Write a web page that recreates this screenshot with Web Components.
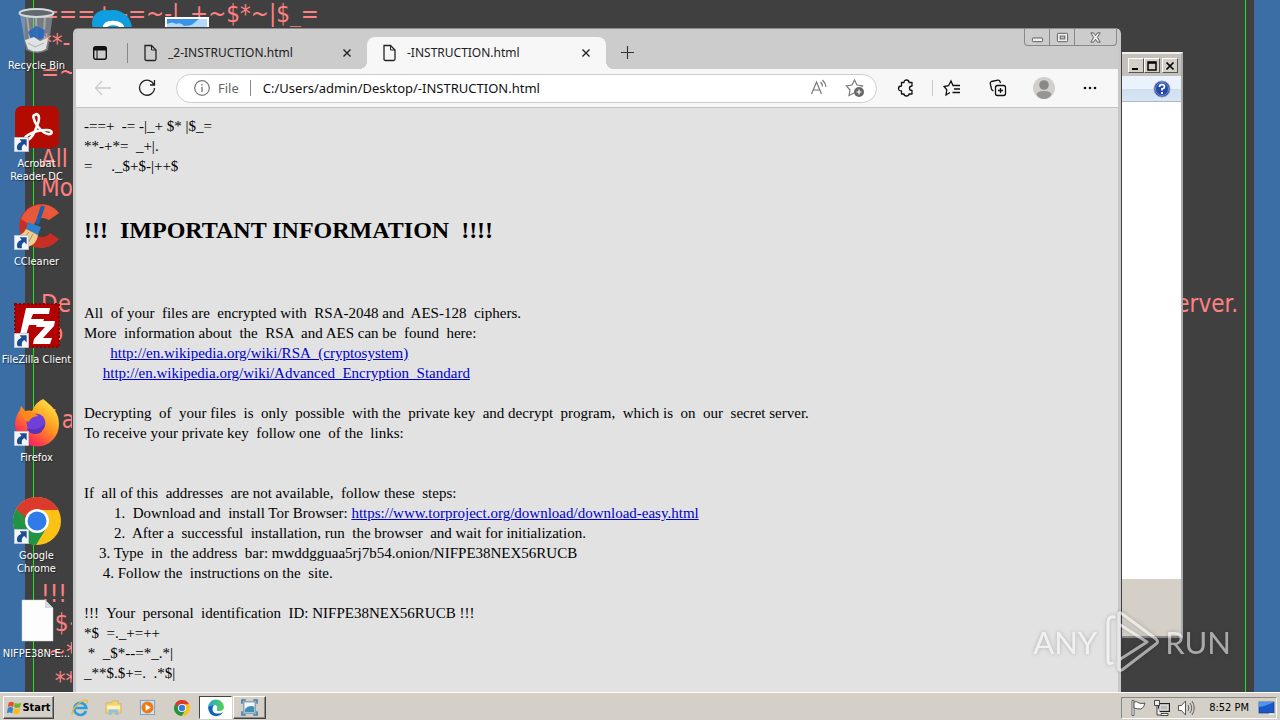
<!DOCTYPE html>
<html lang="en">
<head>
<meta charset="utf-8">
<title>Desktop</title>
<style>
  body { margin: 0; }
</style>
</head>
<body>
<desk-top>
  <wall-paper slot="wallpaper"></wall-paper>
  <desk-icon slot="icons" icon="bin" label="Recycle Bin"></desk-icon>
  <desk-icon slot="icons" icon="acrobat" shortcut label="Acrobat Reader DC"></desk-icon>
  <desk-icon slot="icons" icon="ccleaner" shortcut label="CCleaner"></desk-icon>
  <desk-icon slot="icons" icon="filezilla" shortcut label="FileZilla Client"></desk-icon>
  <desk-icon slot="icons" icon="firefox" shortcut label="Firefox"></desk-icon>
  <desk-icon slot="icons" icon="chrome" shortcut label="Google Chrome"></desk-icon>
  <desk-icon slot="icons" icon="blank" label="NIFPE38N-E..."></desk-icon>
  <desk-icon slot="icons2" icon="skype"></desk-icon>
  <desk-icon slot="icons2" icon="photo"></desk-icon>
  <classic-window slot="windows"></classic-window>
  <browser-window slot="windows">
    <browser-tab slot="tabs" label="_2-INSTRUCTION.html"></browser-tab>
    <browser-tab slot="tabs" label="-INSTRUCTION.html" active></browser-tab>
    <note-page></note-page>
  </browser-window>
  <water-mark slot="windows"></water-mark>
  <task-bar slot="taskbar"></task-bar>
</desk-top>

<script>
const icons = {
  bin: ['48 48', `<path d="M7 7 13 43Q24 49 35 43L40 7Z" fill="#aeb8c0" opacity=".5"/><path d="M14 9 18 42M23 10 24 43M32 9 30 42" stroke="#f3f7fa" stroke-width="2" opacity=".35"/><ellipse cx="23.500" cy="6" rx="17" ry="4" fill="#62696e" stroke="#d5dadd" stroke-width="2"/><path d="M15 25l8-6 9 4-1 8-12 3z" fill="#1d63c0" opacity=".8"/><path d="M12 33l9-3 6 4 8-3-2 11q-9 5-18 0z" fill="#e0e3e3"/><path d="M15 36l7 4 9-4" stroke="#a9afb2" fill="none"/>`],
  acrobat: ['48 48', `<rect x="2" y="1" width="44" height="42" rx="7" fill="#b30b00"/><path d="M22 10c3-3 6 2 2 11-2 6-6 12-9 14-4 2-5-2 0-5 6-4 13-5 19-5 6 0 6 5 1 4-6-1-13-10-14-15-1-2-1-4 1-4Z" fill="none" stroke="#fff" stroke-width="2.600"/>`],
  ccleaner: ['48 48', `<path d="M46 10A22 22 0 1 0 46 36L37 30A10 10 0 1 1 36 17Z" fill="#c92e24"/><path d="M46 10A22 22 0 0 0 8 16l12 8q4-13 16-7Z" fill="#e8583a"/><path d="M30 3 24 21" stroke="#1d5fa6" stroke-width="4"/><path d="M15 19l13 5-3 8-12-6Z" fill="#2f80cb"/><path d="M13 26l12 6q-1 9-10 12L2 34Q10 32 13 26Z" fill="#f0cf8e"/><path d="M16 29 9 38M20 31l-6 11" stroke="#b98d47"/>`],
  filezilla: ['48 48', `<rect x="2" y="3" width="44" height="43" fill="#b30000" stroke="#8c0000" stroke-width="2" stroke-dasharray="2 2"/><path d="M13 7h24l-1 6H20l-2 5h13l-2 6H16l-4 14H6Z M25 20h17l-1 5-11 12h9l-2 6H20l1-5 11-12h-9Z" fill="#fff"/>`],
  firefox: ['48 48', `<defs><linearGradient id="a" x1=".9" y1="0" x2=".2" y2="1"><stop offset="0" stop-color="#fff24a"/><stop offset=".45" stop-color="#ff9a1f"/><stop offset=".8" stop-color="#ff3a4b"/><stop offset="1" stop-color="#e31587"/></linearGradient></defs><path d="M30 0c9 7 16 13 16 25A22 22 0 0 1 2 26c0-6 2-11 5-15l1-4 4 5q4-1 7 0Q23 3 30 0Z" fill="url(#a)"/><circle cx="23" cy="24" r="9.500" fill="#7040d8"/><path d="M9 12q12 0 16 5-8 1-9 6Q8 19 9 12Z" fill="#ff8a16"/><path d="M14 29q9 4 18-4-2 11-11 10-6-1-7-6Z" fill="#5c32b8"/>`],
  chrome: ['48 48', `<circle cx="24" cy="24" r="24" fill="#fbc116"/><path d="M24 24 3.200 12A24 24 0 0 1 44.800 12L45 13H24Z" fill="#dc3a2c"/><path d="M3.200 12A24 24 0 0 0 23 48L34 30 24 24 14 30Z" fill="#1f9447"/><path d="M3.200 12 14 30 24 24V12Z" fill="#dc3a2c"/><path d="M3.200 12 14 30 17 24Z" fill="#1f9447"/><circle cx="24" cy="24" r="12" fill="#fff"/><circle cx="24" cy="24" r="9.500" fill="#2f7be8"/>`],
  blank: ['48 48', `<path d="M9 5h23l8 8v33H9Z" fill="#fdfdfd" stroke="#c9cdd0" stroke-width=".5"/><path d="M32 5v8h8Z" fill="#d3dadd"/>`],
  skype: ['48 48', `<circle cx="24" cy="22" r="19" fill="#0f9fe0"/><circle cx="16" cy="16" r="13" fill="#0f9fe0"/><path d="M33 21q-1-5-9-5t-8 5q0 4 8 5t8 5q-1 5-9 5t-8-5" fill="none" stroke="#fff" stroke-width="4.500"/>`],
  photo: ['48 48', `<rect x="1" y="10" width="44" height="34" fill="#fff"/><rect x="3" y="12" width="40" height="28" fill="#3b93e6"/><path d="M3 17q6-3 9 0 5-2 8 2 8 0 10-3l5-4h8v20H3Z" fill="#b4d8f8"/>`],
  shortcut: ['16 16', `<path d="M.5.5h15v15H.5Z" fill="#f3f6f9" stroke="#bfc8d0"/><path d="M6 2.500h7.500V10L11 7.500Q7.500 9 8.500 14H4Q1 8 8 5Z" fill="#1c4d94"/>`],
  file: ['16 18', `<path d="M3 1.500h6.500L14 6v9q0 1.500-1.500 1.500h-8Q3 16.500 3 15Z" fill="none" stroke="#222" stroke-width="1.300"/><path d="M9.500 1.500V6H14" fill="none" stroke="#222"/>`],
  close: ['10 10', `<path d="M1.500 1.500 8.500 8.500M8.500 1.500 1.500 8.500" stroke="#222" stroke-width="1.400"/>`],
  workspace: ['16 16', `<rect x="1.700" y="1.700" width="12.600" height="12.600" rx="2" fill="none" stroke="#111" stroke-width="1.400"/><path d="M2 2.500h12V5H2ZM5 5v9" stroke="#111" fill="#111" stroke-width="1"/>`],
  plus: ['16 16', `<path d="M8 1v14M1 8h14" stroke="#333" stroke-width="1.200"/>`],
  back: ['18 18', `<path d="M17 9H1.500M8 2 1.500 9 8 16" fill="none" stroke="#ccc" stroke-width="1.300"/>`],
  reload: ['18 18', `<path d="M16 6A7.500 7.500 0 1 0 16.500 9M16.500 1v5H12" fill="none" stroke="#222" stroke-width="1.300"/>`],
  info: ['18 18', `<circle cx="9" cy="9" r="7.300" fill="none" stroke="#777" stroke-width="1.200"/><path d="M9 8v5M9 5v1.500" stroke="#777" stroke-width="1.400"/>`],
  read: ['18 18', `<path d="M1.500 15 6.500 3l5 12M3.500 11h6M10.500 3q2 2 2 4.500M12.500 1q3 3 3.500 7" fill="none" stroke="#777" stroke-width="1.200"/>`],
  addstar: ['20 20', `<path d="M9 15 4 17.500 5 12 1.500 8 7 7 9.500 2 12 7l5.500 1-1 1" fill="none" stroke="#777" stroke-width="1.200"/><circle cx="14" cy="14" r="5" fill="#666"/><path d="M14 11.500v5M11.500 14h5" stroke="#fff" stroke-width="1.200"/>`],
  puzzle: ['18 18', `<path d="M4.500 3.500H7Q7 1 9.500 1T12 3.500h3V7Q12.500 7 12.500 9.200T15 11.500V15h-3q0 2-2.500 2T7 15H4.500v-3Q1.500 12 1.500 9.500T4.500 7Z" fill="none" stroke="#111" stroke-width="1.300" stroke-linejoin="round"/>`],
  star: ['18 18', `<path d="M7 13.500 3 16l.8-5.200L1 7.500l4.500-.8L8 2l2 4.500h7M11 10h6M9.500 13.500H17" fill="none" stroke="#111" stroke-width="1.300"/>`],
  collections: ['18 18', `<rect x="6.500" y="6.500" width="10" height="10" rx="2" fill="none" stroke="#111" stroke-width="1.300"/><path d="M11.500 9v5M9 11.500h5M4.500 12Q3 11.500 2.500 10L1.200 4.500Q1 3 2.500 2.500L9 1.200Q10.500 1 11 2.500L11.500 4" fill="none" stroke="#111" stroke-width="1.300"/>`],
  avatar: ['22 22', `<circle cx="11" cy="11" r="11" fill="#d2d0ce"/><circle cx="11" cy="8" r="4.800" fill="#8a8886"/><path d="M3.500 18q0-4 7.500-4t7.500 4q-3 4-7.500 4t-7.500-4Z" fill="#979593"/>`],
  dots: ['16 16', `<circle cx="3" cy="8" r="1.300" fill="#111"/><circle cx="8" cy="8" r="1.300" fill="#111"/><circle cx="13" cy="8" r="1.300" fill="#111"/>`],
  min: ['14 14', `<rect x="1.500" y="7.500" width="11" height="4" rx="1" fill="#eee" stroke="#555"/>`],
  max: ['14 14', `<rect x="1.500" y="2.500" width="11" height="9" rx="1" fill="#eee" stroke="#555"/><rect x="4.500" y="5.500" width="5" height="3" fill="#ccc" stroke="#555"/>`],
  shut: ['14 14', `<path d="M2 2h3l2 3 2-3h3L9 7l3 5H9L7 9l-2 3H2l3-5Z" fill="#eee" stroke="#555"/>`],
  cmin: ['10 10', `<path d="M1 8h6" stroke="#000" stroke-width="2"/>`],
  cmax: ['10 10', `<path d="M1 1h8v8H1Z M1 2h8" fill="none" stroke="#000" stroke-width="1.500"/>`],
  cshut: ['10 10', `<path d="M1.500 1.500 8.500 8.500M8.500 1.500 1.500 8.500" stroke="#000" stroke-width="1.700"/>`],
  help: ['18 18', `<circle cx="9" cy="9" r="8" fill="#2348a8" stroke="#8b99b8"/><circle cx="9" cy="9" r="6.500" fill="none" stroke="#90a8e0" stroke-width=".7"/><path d="M6.500 7Q6.500 4.700 9 4.700T11.500 7Q11.500 8.300 9 9v1.500M9 12v2" fill="none" stroke="#fff" stroke-width="1.800"/>`],
  winlogo: ['18 18', `<path d="M3 3q3-2 6 0L8 8Q5 6 2 8Z" fill="#e8502a"/><path d="M10 3q3 2 7 0l-1 5q-4 2-7 0Z" fill="#6bb52c"/><path d="M2 9q3-2 6 0l-1 6q-3-2-6 0Z" fill="#2e84d8"/><path d="M9 9q3 2 7 0l-1 6q-4 2-7 0Z" fill="#f6bd1a"/>`],
  ie: ['18 18', `<path d="M15 12a6 6 0 1 1 .3-3H5" fill="none" stroke="#2f9be0" stroke-width="2.600"/><path d="M1.500 15.500Q0 12 6 6q7-6 10-4.500 1 1-.5 3" fill="none" stroke="#e9b92c" stroke-width="1.300"/>`],
  folder: ['18 18', `<path d="M1 4h6l1-2h6v3h3v10H1Z" fill="#f0d372" stroke="#cda74a" stroke-width=".6"/><path d="M2 7h14v4H2Z" fill="#fff2b8"/><path d="M4 17v-5q0-1 1-1h8q1 0 1 1v5h-3v-3H7v3Z" fill="#8bc3e8"/>`],
  wmp: ['18 18', `<rect x="1.500" y="1.500" width="15" height="15" fill="#cfe3f3" stroke="#7a9fc0"/><circle cx="9" cy="9" r="6.300" fill="#ee7a12"/><path d="M7 5.500 12.500 9 7 12.500Z" fill="#fff"/>`],
  edge: ['18 18', `<defs><linearGradient id="e" x1="0" y1="0" x2="1" y2=".2"><stop offset="0" stop-color="#22a5d8"/><stop offset="1" stop-color="#54cf5b"/></linearGradient></defs><path d="M1 9a8 8 0 0 1 16-1q0 4-5 4-3 0-2-2 1-4-3-4-4 0-6 3Z" fill="url(#e)"/><path d="M1 8.500Q3 5.500 7 6q-2 2-1.500 4.500Q6 15 11 14.500q3 0 5-1.500-2 4-7 4.200Q2 17 1 8.500Z" fill="#1263b8"/>`],
  snap: ['18 18', `<rect x="3" y="3" width="12" height="12" fill="#eff7fb" stroke="#66859c"/><path d="M4 11q4-5 10-3v6H4Z" fill="#3d91b5"/><path d="M1 5V1h4M13 1h4v4M17 13v4h-4M5 17H1v-4" fill="none" stroke="#3e7ca8" stroke-width="1.600"/>`],
  flag: ['18 18', `<path d="M3 1.500h2v15H3Z" fill="#fff" stroke="#444" stroke-width=".8"/><path d="M5 3q3-1 5 1 3 1 6 0-1 5-4 6-4 0-7-1Z" fill="#fff" stroke="#444" stroke-width=".9"/>`],
  net: ['18 18', `<rect x="5.500" y="4.500" width="11" height="8" fill="#999" stroke="#222"/><rect x="7" y="6" width="8" height="5" fill="#bdbdbd" stroke="#fff" stroke-width=".7"/><path d="M8 14.500h7v2H8Z" fill="#fff" stroke="#222" stroke-width=".8"/><path d="M1.500 1.500h5v5h-5ZM4 6v10h4" fill="#eee" stroke="#333" stroke-width=".9"/>`],
  sound: ['18 18', `<path d="M1.500 6.500h3l4-4.500v14l-4-4.500h-3Z" fill="#fff" stroke="#444" stroke-width=".9"/><path d="M11 6q2 3 0 6M13 4q3.500 5 0 10M15 2q4.500 7 0 14" fill="none" stroke="#555" stroke-width=".9"/>`],
  screen: ['18 18', `<rect x="1" y="3" width="15" height="11" fill="#1a57c8" stroke="#173a78" stroke-width=".7"/><path d="M1 8q7-1 15-5H1Z" fill="#4d93f0"/><path d="M11 15h5" stroke="#eee" stroke-width="1.500"/>`],
  play: ['56 64', `<path d="M9 53Q5 55 5 50V13q0-7 6-6M16 50V4q0-2 2-1L53 29q3 3 0 5L19 60q-2 1-3-1V50l28-18M16 14l28 18" fill="none" stroke="#fff" stroke-width="3" stroke-linejoin="round" stroke-linecap="round"/>`]
};

const define = (name, markup) => customElements.define(name, class extends HTMLElement {
  constructor() {
    super();
    const root = this.attachShadow({ mode: 'open' });
    const t = document.createElement('template');
    t.innerHTML = typeof markup === 'function' ? markup(this) : markup;
    root.append(t.content.cloneNode(true));
  }
});
const attr = (el, name) => el.getAttribute(name) || '';
const ic = (name, size) => `<ui-icon name="${name}" style="--w:${size}px"></ui-icon>`;

customElements.define('ui-icon', class extends HTMLElement {
  connectedCallback() {
    if (this.shadowRoot) return;
    const [box, art] = icons[this.getAttribute('name')];
    this.attachShadow({ mode: 'open' }).innerHTML =
      `<style>:host{display:block;width:var(--w);flex:none}svg{display:block;width:100%}</style>
       <svg viewBox="0 0 ${box}" aria-hidden="true">${art}</svg>`;
  }
});

define('desk-top', `
<style>
  :host { display: grid; grid-template-rows: minmax(0, 1fr) auto; height: 100vh; overflow: hidden; background: #3a6ea5;
    font: 11px/13px "DejaVu Sans Condensed", "Noto Sans", sans-serif; }
  main { position: relative; min-height: 0; overflow: hidden; }
  .icons { position: absolute; inset: 0 auto auto 0; width: 73px; display: grid; grid-auto-rows: 98px; }
  .more { position: absolute; top: 0; left: 75px; display: grid; grid-template-columns: 75px 75px; }
</style>
<main>
  <slot name="wallpaper"></slot>
  <div class="icons"><slot name="icons"></slot></div>
  <div class="more"><slot name="icons2"></slot></div>
  <slot name="windows"></slot>
</main>
<slot name="taskbar"></slot>`);

define('wall-paper', `
<style>
  :host { display: block; position: absolute; inset: 0 26px 0 25px; background: #404040; color: #ff8080;
    font-size: 24px; line-height: 29px; overflow: hidden; padding: 0 8px; }
  .in { border: solid #1ee61e; border-width: 0 1px; height: 100%; padding: 0 7px; box-sizing: border-box; }
  .row { height: 29px; white-space: pre; display: flex; justify-content: space-between; }
</style>
<div class="in"></div>`);
{
  const rows = { 0: '===+ -=~-|_+~$*~|$_=', 1: '**-', 2: '=~', 5: 'All', 6: 'Mo', 10: 'De', 11: 'To', 14: 'If a', 20: '!!!', 21: '  $~', 22: ' ~*', 23: '  **', 24: '=' };
  const box = document.querySelector('wall-paper').shadowRoot.querySelector('.in');
  for (let i = 0; i < 25; i++) {
    const row = document.createElement('div');
    row.className = 'row';
    row.append(Object.assign(document.createElement('span'), { textContent: rows[i] || '' }));
    if (i === 10) row.append(Object.assign(document.createElement('span'), { textContent: 'erver.' }));
    box.append(row);
  }
}

define('desk-icon', el => `
<style>
  :host { display: flex; flex-direction: column; align-items: center; padding-top: 7px; color: #fff; text-align: center; }
  .art { position: relative; width: 48px; }
  .cut { position: absolute; left: 1px; bottom: 1px; }
  span { display: block; margin-top: 4px; width: 70px; text-shadow: 1px 1px 1px #0008; }
</style>
<div class="art">${ic(attr(el, 'icon'), 48)}${el.hasAttribute('shortcut') ? `<div class="cut">${ic('shortcut', 15)}</div>` : ''}</div>
<span>${attr(el, 'label')}</span>`);

define('classic-window', `
<style>
  :host { display: flex; flex-direction: column; position: absolute; inset: 52px 97px 54px 640px; background: #d4d0c8;
    border: 2px solid #e4e1dc; border-right-color: #aaa; border-bottom-color: #888; border-top-color: #f2f0ec; box-sizing: border-box; }
  header { display: flex; justify-content: flex-end; padding: 4px 3px 3px; background: #c4c0bb; }
  button { width: 16px; height: 15px; padding: 0; display: grid; place-items: center; background: #d4d0c8;
    border: 1px solid; border-color: #fff #555 #555 #fff; }
  button:last-child { margin-left: 2px; }
  .bar { display: flex; justify-content: flex-end; align-items: center; height: 26px; padding-right: 10px;
    box-sizing: border-box; background: linear-gradient(#eaf3fc 50%, #cfdff0 50%, #d8e6f4); border-bottom: 1px solid #aab8c8; }
  .bar button { border: 0; margin: 0; width: 18px; height: 18px; background: none; }
  .pane { flex: 1; background: #fff; }
  footer { height: 57px; }
</style>
<header><button aria-label="Minimize">${ic('cmin', 10)}</button><button aria-label="Maximize">${ic('cmax', 10)}</button><button aria-label="Close">${ic('cshut', 10)}</button></header>
<div class="bar"><button aria-label="Help">${ic('help', 18)}</button></div>
<div class="pane"></div><footer></footer>`);

define('browser-tab', el => `
<style>
  :host { display: flex; align-items: center; gap: 10px; flex: 0 1 239px; min-width: 0; height: 32px; box-sizing: border-box;
    padding: 0 12px 0 14px; color: #222; border-radius: 8px 8px 0 0; position: relative; font: 12px/16px "Noto Sans", sans-serif; }
  :host([active]) { background: #f7f7f7; }
  :host([active])::before, :host([active])::after { content: ""; position: absolute; bottom: 0; width: 8px; height: 8px; }
  :host([active])::before { left: -8px; background: radial-gradient(circle at 0 0, #0000 8px, #f7f7f7 8px); }
  :host([active])::after { right: -8px; background: radial-gradient(circle at 100% 0, #0000 8px, #f7f7f7 8px); }
  span { flex: 1; white-space: nowrap; overflow: hidden; }
  button { width: 16px; height: 16px; padding: 0; border: 0; background: none; display: grid; place-items: center; }
</style>
${ic('file', 16)}<span>${attr(el, 'label')}</span><button aria-label="Close tab">${ic('close', 10)}</button>`);

define('browser-window', `
<style>
  :host { display: flex; flex-direction: column; position: absolute; inset: 28px 159px 0 73px; background: #ccc;
    border: solid #c8c8c8; border-width: 1px 3px 0; border-top-color: #8b8b8b; outline: 1px solid #404040;
    border-radius: 5px 5px 0 0; box-sizing: border-box; overflow: hidden; }
  button { border: 0; padding: 0; background: none; display: grid; place-items: center; flex: none; width: 30px; height: 30px; }
  .strip { display: flex; align-items: flex-end; height: 40px; padding-left: 9px; }
  .space { margin: 0 12px 1px 0; }
  .strip > i { width: 1px; height: 20px; background: #888; margin-bottom: 6px; }
  .new { margin: 0 0 2px 6px; }
  .controls { display: flex; align-self: flex-start; margin-left: auto; margin-right: 1px; border: 1px solid #888; border-top: 0;
    border-radius: 0 0 4px 4px; height: 17px; box-sizing: border-box; }
  .controls button { width: 25px; height: 16px; border-right: 1px solid #888; }
  .controls button:last-child { width: 41px; border: 0; }
  .tools { display: flex; align-items: center; height: 38px; padding: 0 13px 0 12px; gap: 14px; background: #f7f7f7; border-bottom: 1px solid #c2c2c2; }
  .address { flex: 1; min-width: 0; display: flex; align-items: center; height: 29px; padding: 0 10px 0 16px; gap: 7px; box-sizing: border-box;
    border: 1px solid #ccc; border-radius: 15px; background: #fff; }
  label { font: 13px/16px "Noto Sans", sans-serif; color: #666; }
  .address i { width: 1px; height: 16px; background: #888; margin: 0 5px 0 4px; }
  input { flex: 1; min-width: 0; border: 0; padding: 0; background: none; outline: 0; font: 13px/18px "Noto Sans", sans-serif; color: #111; }
  .address button { width: 22px; height: 22px; }
  .address button:last-child { margin-left: 7px; }
  .right { display: flex; align-items: center; gap: 16px; }
  .right i { width: 1px; height: 16px; background: #c8c8c8; margin: 0 -12px 0 -5px; }
  .page { flex: 1; min-height: 0; overflow: hidden; background: #e2e2e2; }
</style>
<div class="strip">
  <button class="space" aria-label="Tab actions">${ic('workspace', 16)}</button><i></i>
  <slot name="tabs"></slot>
  <button class="new" aria-label="New tab">${ic('plus', 15)}</button>
  <div class="controls"><button aria-label="Minimize">${ic('min', 13)}</button><button aria-label="Maximize">${ic('max', 13)}</button><button aria-label="Close">${ic('shut', 13)}</button></div>
</div>
<div class="tools">
  <button aria-label="Back">${ic('back', 18)}</button>
  <button aria-label="Reload">${ic('reload', 18)}</button>
  <div class="address">
    ${ic('info', 18)}<label for="url">File</label><i></i>
    <input id="url" value="C:/Users/admin/Desktop/-INSTRUCTION.html" spellcheck="false">
    <button aria-label="Read aloud">${ic('read', 18)}</button><button aria-label="Add to favorites">${ic('addstar', 20)}</button>
  </div>
  <div class="right">
    <button aria-label="Extensions">${ic('puzzle', 18)}</button><i></i>
    <button aria-label="Favorites">${ic('star', 18)}</button>
    <button aria-label="Collections">${ic('collections', 18)}</button>
    <button aria-label="Profile">${ic('avatar', 22)}</button>
    <button aria-label="Settings">${ic('dots', 16)}</button>
  </div>
</div>
<div class="page"><slot></slot></div>`);

define('note-page', `<style>
  :host { display: block; padding: 8px; font: 15px/20px "Liberation Serif", "Times New Roman", serif; color: #000; }
  p, h1 { margin: 0; white-space: pre; }
  p + p { margin-top: 20px; }
  p + p.far { margin-top: 40px; }
  h1 { font-size: 24px; line-height: 28px; margin: 40px 0 59px; }
  a { color: #0000c8; }
</style><p>-==+  -= -|_+ $* |$_=
**-+*=  _+|.
=     ._$+$-|++$</p><h1>!!!  IMPORTANT INFORMATION  !!!!</h1><p>All  of your  files are  encrypted with  RSA-2048 and  AES-128  ciphers.
More  information about  the  RSA  and AES can be  found  here:
       <a href="http://en.wikipedia.org/wiki/RSA_(cryptosystem)">http://en.wikipedia.org/wiki/RSA_(cryptosystem)</a>
     <a href="http://en.wikipedia.org/wiki/Advanced_Encryption_Standard">http://en.wikipedia.org/wiki/Advanced_Encryption_Standard</a></p><p>Decrypting  of  your files  is  only  possible  with the  private key  and decrypt  program,  which is  on  our  secret server.
To receive your private key  follow one  of the  links:</p><p class="far">If  all of this  addresses  are not available,  follow these  steps:
        1.  Download and  install Tor Browser: <a href="https://www.torproject.org/download/download-easy.html">https://www.torproject.org/download/download-easy.html</a>
        2.  After a  successful  installation, run  the browser  and wait for initialization.
    3. Type  in  the address  bar: mwddgguaa5rj7b54.onion/NIFPE38NEX56RUCB
     4. Follow the  instructions on the  site.</p><p>!!!  Your  personal  identification  ID: NIFPE38NEX56RUCB !!!
*$  =._+=++
 *  _$*--=*_.*|
_**$.$+=.  .*$|</p>`);

define('water-mark', `
<style>
  :host { display: flex; align-items: center; gap: 6px; position: absolute; right: 49px; bottom: 18px; opacity: .55; color: #fff;
    font: 31px/64px Lato, sans-serif; filter: drop-shadow(0 0 2px #0006); pointer-events: none; }
</style>
<span>ANY</span>${ic('play', 56)}<span>RUN</span>`);

define('task-bar', `
<style>
  :host { display: flex; align-items: center; height: 28px; box-sizing: border-box; padding: 2px 3px 0; position: relative;
    background: #d4d0c8; border-top: 1px solid #fff; color: #000; }
  button { display: flex; align-items: center; justify-content: center; border: 1px solid #0000; padding: 0; background: none;
    width: 33px; height: 23px; box-sizing: border-box; }
  nav { display: flex; gap: 1px; margin-left: 9px; }
  .start, .open { border-color: #fff #444 #444 #fff; box-shadow: inset -1px -1px #888; }
  .start { width: 51px; font: bold 11px/16px "DejaVu Sans Condensed", "Noto Sans", sans-serif; color: #000; }
  .on { background: #fff; border-color: #444 #fff #fff #444; }
  .tray { display: flex; align-items: center; gap: 6px; margin-left: auto; height: 22px; box-sizing: border-box; padding: 0 0 0 7px;
    border: 1px solid; border-color: #888 #fff #fff #888; }
  time { margin: 0 3px 0 8px; white-space: nowrap; }
</style>
<button class="start">${ic('winlogo', 16)}Start</button>
<nav>
  <button aria-label="Internet Explorer">${ic('ie', 18)}</button>
  <button aria-label="Explorer">${ic('folder', 17)}</button>
  <button aria-label="Media Player">${ic('wmp', 17)}</button>
  <button aria-label="Chrome">${ic('chrome', 16)}</button>
  <button class="on" aria-label="Edge">${ic('edge', 18)}</button>
  <button class="open" aria-label="Viewer">${ic('snap', 17)}</button>
</nav>
<div class="tray">${ic('flag', 18)}${ic('net', 18)}${ic('sound', 18)}<time>8:52 PM</time>${ic('screen', 18)}</div>`);
</script>
</body>
</html>
